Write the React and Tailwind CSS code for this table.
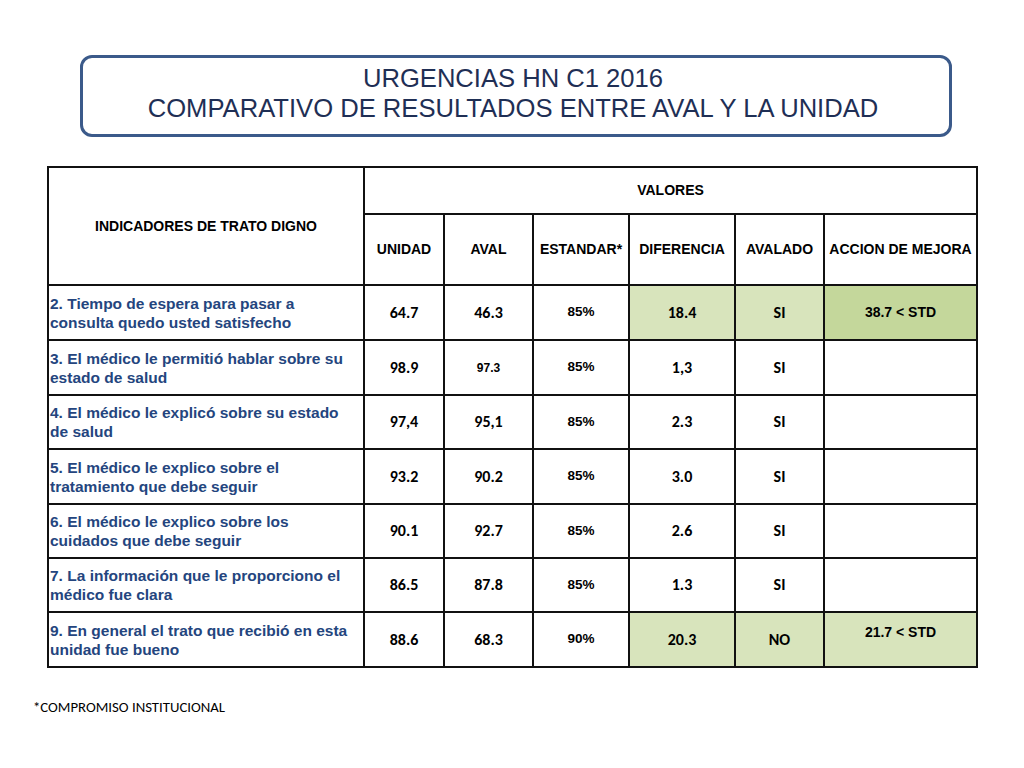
import React from 'react';

const rows = [
  { text: ['2. Tiempo de espera para pasar a', 'consulta quedo usted satisfecho'], unidad: '64.7', aval: '46.3', std: '85%', dif: '18.4', ok: 'SI', accion: '38.7 < STD', strong: true },
  { text: ['3. El médico le permitió hablar sobre su', 'estado de salud'], unidad: '98.9', aval: '97.3', smallAval: true, std: '85%', dif: '1,3', ok: 'SI' },
  { text: ['4. El médico le explicó sobre su estado', 'de salud'], unidad: '97,4', aval: '95,1', std: '85%', dif: '2.3', ok: 'SI' },
  { text: ['5. El médico le explico sobre el', 'tratamiento que debe seguir'], unidad: '93.2', aval: '90.2', std: '85%', dif: '3.0', ok: 'SI' },
  { text: ['6. El médico le explico sobre los', 'cuidados que debe seguir'], unidad: '90.1', aval: '92.7', std: '85%', dif: '2.6', ok: 'SI' },
  { text: ['7. La información que le proporciono el', 'médico fue clara'], unidad: '86.5', aval: '87.8', std: '85%', dif: '1.3', ok: 'SI' },
  { text: ['9. En general el trato que recibió en esta', 'unidad fue bueno'], unidad: '88.6', aval: '68.3', std: '90%', dif: '20.3', ok: 'NO', accion: '21.7 < STD', top: true },
];

const heights = ['h-[55px]', 'h-[55px]', 'h-[54px]', 'h-[55px]', 'h-[54px]', 'h-[54px]', 'h-[55px]'];

const arial = "font-['Liberation_Sans',Arial,sans-serif]";
const calibri = "font-['Carlito','Lato',sans-serif]";
const cell = 'border-2 border-[#111] text-center align-middle p-0';

export default function App() {
  return (
    <div className="w-[1024px] h-[768px] bg-white relative overflow-hidden">
      <div className="pt-[55px] pl-[80px]">
        <div className={`w-[872px] h-[82px] border-[3px] border-[#3b5a8a] rounded-[12px] flex flex-col items-center justify-center pb-[6px] pr-[6px] text-[#1f2f55] text-[25.6px] leading-[30px] ${arial}`}>
          <div>URGENCIAS HN C1 2016</div>
          <div>COMPARATIVO DE RESULTADOS ENTRE AVAL Y LA UNIDAD</div>
        </div>
      </div>

      <div className="pt-[29px] pl-[47px]">
        <table className="table-fixed border-collapse w-[929px]">
          <colgroup>
            <col className="w-[316px]" />
            <col className="w-[80px]" />
            <col className="w-[89px]" />
            <col className="w-[96px]" />
            <col className="w-[106px]" />
            <col className="w-[89px]" />
            <col className="w-[153px]" />
          </colgroup>
          <thead className={`${arial} text-[14px] font-bold text-black`}>
            <tr className="h-[47px]">
              <th rowSpan={2} className={cell}>INDICADORES DE TRATO DIGNO</th>
              <th colSpan={6} className={cell}>VALORES</th>
            </tr>
            <tr className="h-[71px]">
              <th className={cell}>UNIDAD</th>
              <th className={cell}>AVAL</th>
              <th className={cell}>ESTANDAR*</th>
              <th className={cell}>DIFERENCIA</th>
              <th className={cell}>AVALADO</th>
              <th className={`${cell} whitespace-nowrap`}>ACCION DE MEJORA</th>
            </tr>
          </thead>
          <tbody>
            {rows.map((r, i) => (
              <tr key={i} className={heights[i]}>
                <td className={`border-2 border-[#111] p-0 pl-[1px] align-middle text-left ${arial} font-bold text-[15.5px] leading-[19px] text-[#24457e] whitespace-nowrap`}>
                  <div>{r.text[0]}</div>
                  <div>{r.text[1]}</div>
                </td>
                <td className={`${cell} ${calibri} font-bold text-[16px]`}>{r.unidad}</td>
                <td className={`${cell} ${r.smallAval ? `${arial} text-[12px]` : `${calibri} text-[16px]`} font-bold`}>{r.aval}</td>
                <td className={`${cell} ${arial} font-bold text-[13.5px]`}>{r.std}</td>
                <td className={`${cell} ${calibri} font-bold text-[16px] ${r.accion ? 'bg-[#d8e4bc]' : ''}`}>{r.dif}</td>
                <td className={`${cell} ${calibri} font-bold text-[16px] ${r.accion ? 'bg-[#d8e4bc]' : ''}`}>{r.ok}</td>
                <td className={`${cell} ${arial} font-bold text-[14px] ${r.accion ? (r.strong ? 'bg-[#c4d79b]' : 'bg-[#d8e4bc]') : ''} ${r.top ? 'align-top pt-[9px]' : ''}`}>
                  {r.accion}
                </td>
              </tr>
            ))}
          </tbody>
        </table>
      </div>

      <div className={`pt-[28px] pl-[33px] ${calibri} text-[14.75px] text-black`}>*COMPROMISO INSTITUCIONAL</div>
    </div>
  );
}
